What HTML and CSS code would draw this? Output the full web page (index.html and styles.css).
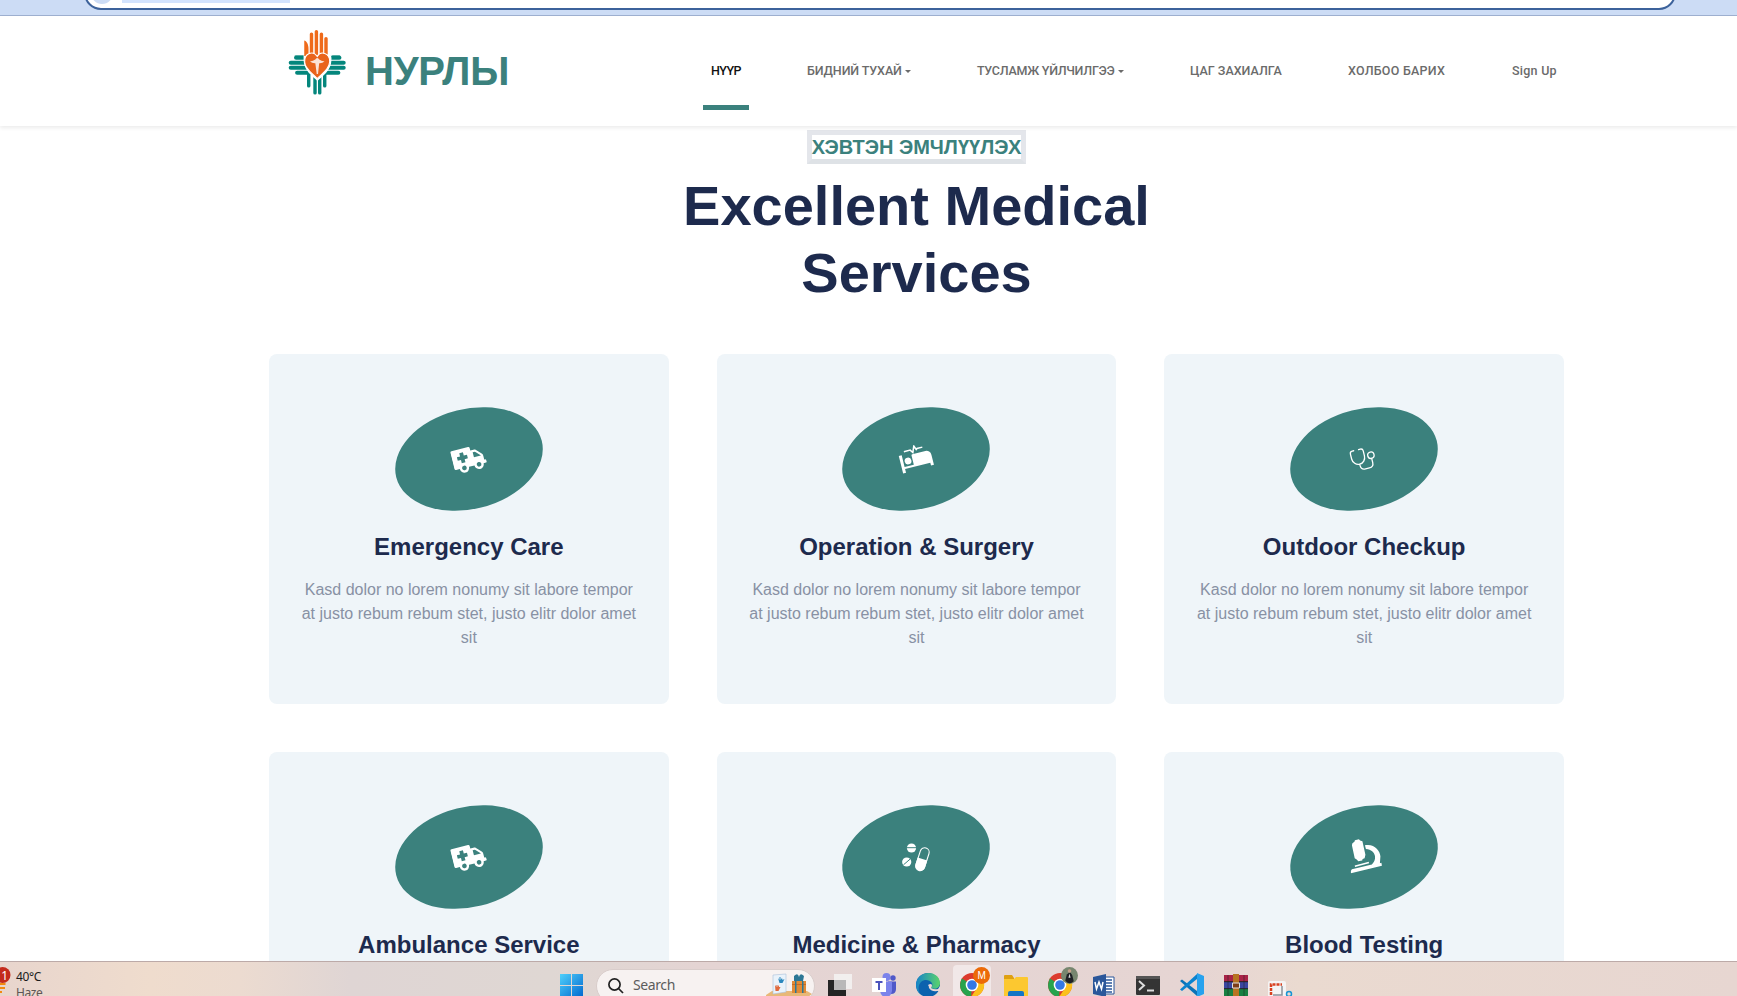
FILE: index.html
```html
<!DOCTYPE html>
<html lang="mn">
<head>
<meta charset="utf-8">
<title>НУРЛЫ</title>
<link rel="stylesheet" href="styles.css">
</head>
<body>
<svg class="defs" width="0" height="0">
  <defs>
    <symbol id="ambulance" viewBox="0 0 36 28">
      <path fill="#fff" fill-rule="evenodd" d="M2 1h18a1.500 1.500 0 0 1 1.500 1.500V5H25c1 0 1.800.3 2.500 1l5 5c.7.700 1 1.500 1 2.500V18h1a1 1 0 0 1 1 1v1.500a1 1 0 0 1-1 1H32a5 5 0 0 1-10 0h-6a5 5 0 0 1-10 0H2A1.500 1.500 0 0 1 .5 20V2.500A1.500 1.500 0 0 1 2 1zM9.500 5v3.500H6v4h3.500V16h4v-3.500H17v-4h-3.500V5zM23.500 7.500V13H31v-.500l-5-5zM11 19a2.500 2.500 0 1 0 0 5 2.500 2.500 0 0 0 0-5zM27 19a2.500 2.500 0 1 0 0 5 2.500 2.500 0 0 0 0-5z"/>
    </symbol>
  </defs>
</svg>
<div class="browser">
  <div class="address"><i class="site"></i><i class="url"></i></div>
</div>
<header class="navbar">
  <a class="brand">
    <svg class="logo" viewBox="0 0 60 68" preserveAspectRatio="none">
      <g stroke="#04867c" stroke-width="4" stroke-linecap="round" fill="none">
        <path stroke="#6fb9b0" stroke-width="2" d="M9 28H18M44 28H50"/>
        <path d="M9.500 29.800H50M4.500 34.800H54M4.500 39.800H54M10.500 44.800H49"/>
        <path stroke-width="3.200" d="M21.300 44V58M27.200 46V65M31.600 46V65M36.300 44V58"/>
      </g>
      <g transform="translate(1.500 0)">
        <path fill="#fff" d="M15 27C15 22 28 22 28 27C29 22 43 21 41 33C41 42 32 49 28 53C23 48 15 42 15 32z"/>
        <g stroke="#ef6a1a" stroke-width="3.200" stroke-linecap="round">
          <path d="M22.400 6V26M27 3.500V26M31.700 6V26M36 10.500V26"/>
        </g>
        <path fill="#ef6a1a" d="M15.600 12.500c2 0 4 4 4 8.500v7h-4z"/>
        <path fill="#e9641b" stroke="#fff" stroke-width="1" d="M27.800 28.500C24 22 15.500 25 16 34c.3 7 7 11 11.800 16.500C33 45 39 41 39.500 33.500 39.500 25 31 22.500 27.800 28.500z"/>
        <path fill="#fbe3d6" d="M21 33.500q3-.5 5-2 .5-1.500 1.800-1.500t1.800 1.500q2 1.500 5 2-2 2-5 1.800L28.500 46h-1.200L26 35.300q-3 .2-5-1.800z"/>
      </g>
    </svg>
    <span class="brand-name">НУРЛЫ</span>
  </a>
  <nav class="menu">
    <a class="n1 active">НҮҮР</a>
    <a class="n2"><span>БИДНИЙ ТУХАЙ</span><i class="caret"></i></a>
    <a class="n3"><span>ТУСЛАМЖ ҮЙЛЧИЛГЭЭ</span><i class="caret"></i></a>
    <a class="n4">ЦАГ ЗАХИАЛГА</a>
    <a class="n5">ХОЛБОО БАРИХ</a>
    <a class="n6">Sign Up</a>
  </nav>
</header>
<main class="container">
  <div class="heading">
    <h5 class="label">ХЭВТЭН ЭМЧЛҮҮЛЭХ</h5>
    <h1>Excellent Medical Services</h1>
  </div>
  <div class="services">
    <article class="card">
      <div class="icon"><svg width="34" height="27"><use href="#ambulance"/></svg></div>
      <h4>Emergency Care</h4>
      <p>Kasd dolor no lorem nonumy sit labore tempor at justo rebum rebum stet, justo elitr dolor amet sit</p>
    </article>
    <article class="card">
      <div class="icon"><svg width="34" height="28" viewBox="0 0 34 28" fill="#fff">
        <path fill="none" stroke="#fff" stroke-width="1.500" d="M7 4h6.500l2 3L18 .8l1.500 4 1-.8H26"/>
        <path d="M1 7h3v12h9.500V9.500a1 1 0 0 1 1-1H28a5 5 0 0 1 5 5V24h-3v-3H4v4H1z"/><circle cx="8.800" cy="14" r="3.400"/>
      </svg></div>
      <h4>Operation &amp; Surgery</h4>
      <p>Kasd dolor no lorem nonumy sit labore tempor at justo rebum rebum stet, justo elitr dolor amet sit</p>
    </article>
    <article class="card">
      <div class="icon"><svg width="28" height="28" viewBox="0 0 28 28" fill="none" stroke="#fff" stroke-width="1.300" stroke-linecap="round">
        <path d="M6 3.500H4.500Q2 3.500 2 6v5a6.600 7 0 0 0 13.200 0V6Q15.200 3.500 12.700 3.500H11M8.600 18v1.500q0 4.500 4.500 4.500h4q4.500 0 4.500-4.500v-4.300"/><circle cx="21.600" cy="12" r="3.200"/>
      </svg></div>
      <h4>Outdoor Checkup</h4>
      <p>Kasd dolor no lorem nonumy sit labore tempor at justo rebum rebum stet, justo elitr dolor amet sit</p>
    </article>
    <article class="card">
      <div class="icon"><svg width="34" height="27"><use href="#ambulance"/></svg></div>
      <h4>Ambulance Service</h4>
      <p>Kasd dolor no lorem nonumy sit labore tempor at justo rebum rebum stet, justo elitr dolor amet sit</p>
    </article>
    <article class="card">
      <div class="icon"><svg class="upright" width="30" height="30" viewBox="0 0 30 30">
        <circle cx="10.500" cy="6" r="4.600" fill="#fff"/><path stroke="#3b817d" d="M6 5.700h9"/>
        <circle cx="5.700" cy="20" r="4.600" fill="#fff"/><path stroke="#3b817d" d="M2.500 22.800l6.500-5.600"/>
        <g transform="rotate(18 21.500 17)"><rect x="17" y="5.500" width="9" height="23" rx="4.500" fill="none" stroke="#fff" stroke-width="1.100"/><path fill="#fff" d="M16.500 17h10v7.500a5 5 0 0 1-10 0z"/></g>
      </svg></div>
      <h4>Medicine &amp; Pharmacy</h4>
      <p>Kasd dolor no lorem nonumy sit labore tempor at justo rebum rebum stet, justo elitr dolor amet sit</p>
    </article>
    <article class="card">
      <div class="icon"><svg class="upright scope" width="34" height="36" viewBox="0 0 34 36" fill="#fff">
        <path d="M2.500 5l2-1.500L5 2l4-1 1.200 1.200L12.500 3 15.500 16.500 14.700 20l-2 .8-.4 1.500-4 .8-1.200-1.600-2.300-1.400L2 7z"/>
        <path d="M15 7C24 5 30 12 30.500 18l-.5 7 1.500-.5.500 3L1 35v-2.500L2 31l20-4.800C27 22 27 12 16 10.800z"/><path stroke="#fff" stroke-width="1.500" d="M5 28l14-3.700"/>
      </svg></div>
      <h4>Blood Testing</h4>
      <p>Kasd dolor no lorem nonumy sit labore tempor at justo rebum rebum stet, justo elitr dolor amet sit</p>
    </article>
  </div>
</main>
<footer class="taskbar">
  <div class="weather">
    <svg width="12" height="35" viewBox="0 0 12 35"><path stroke="#f28a10" stroke-width="2" d="M0 22h5.500M0 26h5M0 30h2"/><circle cx="2.500" cy="13" r="8" fill="#c42b1c"/><text x="1.300" y="17.500" fill="#fff" class="badge">1</text></svg>
    <div class="temp"><b>40°C</b><span>Haze</span></div>
  </div>
  <svg class="win" width="23" height="23" viewBox="0 0 23 23"><defs><linearGradient id="wg" x2="1" y2="1"><stop stop-color="#4fd0fb"/><stop offset="1" stop-color="#0268cf"/></linearGradient></defs><path fill="url(#wg)" d="M0 0h11v11H0zM12 0h11v11H12zM0 12h11v11H0zM12 12h11v11H12z"/></svg>
  <div class="search">
    <svg width="16" height="16" viewBox="0 0 16 16" fill="none" stroke="#222" stroke-width="1.700"><circle cx="6.500" cy="6.500" r="5.600"/><path d="M10.500 10.500L15 15"/></svg>
    <span>Search</span>
    <svg class="gifts" width="46" height="24" viewBox="0 0 46 24"><path fill="#e8b878" d="M0 22l6-4h35l5 3-4 3H0z"/><path fill="#e9f2fa" stroke="#a9bfda" stroke-width=".6" d="M7 2l13-1v18L7 21z"/><path fill="#2a87bd" d="M12 5l1.500 2V4h1v3l1.500-2 .5 2 2-1-2 4h-3z"/><path fill="#e0693c" d="M9 12l1.500 2v-2h1v2l1.500-2v2l1.500 0-2 4h-3z"/><path fill="#e08a35" d="M26 8h14v12H26z"/><path fill="#c86a20" d="M26 11h14v1H26z"/><path fill="#2c7795" d="M28 3q4-4 5 1 1-5 5-1l-1 5h-9zM29 8h1.500v12H29zM36 8h1.500v12H36z"/></svg>
  </div>
  <div class="apps">
    <svg viewBox="0 0 26 24"><path fill="#252525" d="M1 7h18v17H1z"/><path fill="#f2f0ef" fill-opacity=".95" d="M7 1h18v15H7z"/><path fill="#b9b8b8" d="M7 7h12v10H7z"/></svg>
    <svg viewBox="0 0 26 24"><circle cx="15.500" cy="4" r="4" fill="#7b83eb"/><circle cx="22" cy="5" r="2.700" fill="#5059c9"/><path fill="#5059c9" d="M17 8.500h8V16q0 5-5 5z"/><path fill="#7b83eb" d="M10 8.500h11V18q-1 6-6 6t-6-6z"/><path fill="#fff" d="M1 5h14v14H1z"/><path fill="#4b53bc" d="M4.500 8h7v2H9v7H7v-7H4.500z"/></svg>
    <svg viewBox="0 0 26 24"><defs><linearGradient id="eg" x2="1"><stop stop-color="#1684c9"/><stop offset="1" stop-color="#5bd36b"/></linearGradient></defs><circle cx="13" cy="12" r="12" fill="#0c62ae"/><path fill="url(#eg)" d="M1 12C1-3 24-4 25 10c0 5-5 7-9 5 5-6-5-11-10-6-3 3-3 8-1 12Q1 17 1 12z"/><path fill="#e8d8d6" d="M16 15q3 2 7 1l2-3v5h-3q-5 1-8-3 0-2-1-3 3-2 4 0 0 2-1 3z"/></svg>
    <div class="tile"><svg viewBox="0 0 26 24"><circle cx="12" cy="12" r="12" fill="#dc3a2d"/><path fill="#27a34d" d="M2 5.500L12 12l-1 12A12 12 0 0 1 2 5.500z"/><path fill="#fbc01c" d="M12 7h11A12 12 0 0 1 11 24l6-9z"/><circle cx="12" cy="12" r="6.300" fill="#fff"/><circle cx="12" cy="12" r="4.800" fill="#3478e5"/></svg><svg class="pic" viewBox="0 0 16 16"><circle cx="8" cy="8" r="8" fill="#ec6a08"/><text x="4.200" y="11" class="m">M</text></svg></div>
    <svg viewBox="0 0 26 24"><path fill="#dfa012" d="M1 3q0-1 1-1h7l2 3v5H1z"/><path fill="#fcc830" d="M1 6h10l2-2h11q1 0 1 1v19H1z"/><path fill="#1575c5" d="M5 24v-4q0-2 2-2h12q2 0 2 2v4z"/></svg>
    <div class="tile plain"><svg viewBox="0 0 26 24"><circle cx="12" cy="12" r="12" fill="#dc3a2d"/><path fill="#27a34d" d="M2 5.500L12 12l-1 12A12 12 0 0 1 2 5.500z"/><path fill="#fbc01c" d="M12 7h11A12 12 0 0 1 11 24l6-9z"/><circle cx="12" cy="12" r="6.300" fill="#fff"/><circle cx="12" cy="12" r="4.800" fill="#3478e5"/></svg><svg class="pic" viewBox="0 0 16 16"><circle cx="8" cy="8" r="8" fill="#77866f"/><path fill="#1e2025" d="M4 13l1.500-6 2-1.500 1.500 0 1.500 2 1.500 6q-4 4-8-.5z"/><circle cx="8" cy="3.700" r="1.700" fill="#c79f8a"/><path fill="#d8d8d8" d="M8 6l1 4H7z"/></svg></div>
    <svg viewBox="0 0 26 24"><path fill="#fff" stroke="#2b579a" d="M12 4h11v17H12z"/><path stroke="#2b579a" stroke-width="1.500" d="M14 7h7M14 10h7M14 13h7M14 16h7M14 19h7"/><path fill="#2b579a" d="M2 4l13-3v23L2 21z"/><path fill="none" stroke="#fff" stroke-width="1.500" d="M4 9l1.500 7L8 9l2.500 7L12 9"/></svg>
    <svg viewBox="0 0 26 24"><rect x="1" y="3" width="24" height="19" rx="1" fill="#343434"/><path fill="#555" d="M1 3h24v3H1z"/><path fill="none" stroke="#ddd" stroke-width="2" d="M4 8l5 4.500L4 17M12 17.500h7"/></svg>
    <svg viewBox="0 0 26 24"><path fill="#0b73b8" d="M1 8l2-1.500L18 18v5z"/><path fill="#0a83cf" d="M1 16.500L18 1v5L3 18z"/><path fill="#27a2ee" d="M18 0l7 3v18l-7 3z"/></svg>
    <svg viewBox="0 0 26 24"><path fill="#a92347" d="M1 2h24v7H1z"/><path fill="#3a45a0" d="M1 9h24v7H1z"/><path fill="#198042" d="M1 16h24v7H1z"/><path stroke="#222" d="M1 8.700h24M1 15.700h24"/><path stroke="#222" stroke-width=".5" d="M5 2v21M21 2v21"/><path fill="#b87422" d="M10 1h6v23h-6z"/><path fill="#7c3d18" stroke="#ddd" d="M9.500 10h7v5h-7z"/></svg>
    <svg class="snip" viewBox="0 0 26 24"><rect x="1" y="8" width="18" height="18" rx="2" fill="#f4f4f4"/><path fill="none" stroke="#d8401f" stroke-width="2.500" stroke-dasharray="3 1" d="M4 22V11.500h11"/><path fill="none" stroke="#8b9199" stroke-width="1.500" d="M15 13v9H6"/><circle cx="22" cy="21" r="2.500" fill="none" stroke="#1694d5" stroke-width="1.500"/></svg>
  </div>
</footer>
</body>
</html>
```
FILE: styles.css
```css
* { box-sizing: border-box; }
body {
  margin: 0;
  height: 996px;
  overflow: hidden;
  display: flex;
  flex-direction: column;
  background: #fff;
  font-family: "Liberation Sans", Arial, sans-serif;
}
.defs { display: block; flex: none; }
.browser {
  flex: none;
  height: 16px;
  background: #ccdcf5;
  border-bottom: 1px solid #9fb1d1;
  overflow: hidden;
}
.address {
  width: 1592px;
  height: 34px;
  margin: -24px 0 0 84px;
  padding-left: 5px;
  background: #fff;
  border: 2px solid #3c629b;
  border-radius: 17px;
  display: flex;
  align-items: flex-start;
  gap: 9px;
}
.site { width: 22px; height: 22px; margin-top: 4px; border-radius: 50%; background: #ccdcf5; }
.url { width: 168px; height: 25px; background: #d3e3fd; }
.navbar {
  flex: none;
  height: 110px;
  display: flex;
  position: relative;
  background: #fff;
  box-shadow: 0 2px 4px rgba(0, 0, 0, .08);
}
.brand { display: flex; margin-left: 286px; width: 417px; }
.logo { margin-top: 12px; flex: none; width: 64px; height: 68px; }
.brand-name { margin: 31px 0 0 15px; font-size: 40px; line-height: 48px; font-weight: 700; letter-spacing: -.2px; color: #3b817d; }
.menu { display: flex; gap: 50px; padding-top: 40px; font: 500 12.500px/29px Roboto, sans-serif; color: #6b6b6b; }
.menu a { display: flex; height: 54px; padding: 0 8px; white-space: nowrap; align-items: flex-start; }
.menu .active { color: #111; border-bottom: 5px solid #3b817d; }
.n1 { width: 46px; letter-spacing: -.5px; }
.n2 { width: 120px; letter-spacing: -.1px; }
.n3 { width: 163px; letter-spacing: -.25px; }
.n4 { width: 108px; }
.n5 { width: 114px; letter-spacing: .25px; }
.n6 { width: 61px; letter-spacing: .25px; }
.caret { margin: 14px 0 0 3px; border: 3px solid transparent; border-top-color: #6b6b6b; border-bottom: 0; }
.container { flex: 1; min-height: 0; overflow: hidden; width: 1295px; margin-left: 269px; }
.heading { display: flex; flex-direction: column; align-items: center; padding-top: 4px; height: 228px; text-align: center; }
.label { margin: 0 0 8px; border: 5px solid #e4e6eb; border-bottom-color: #dee2e6; font-size: 20px; line-height: 24px; font-weight: 700; color: #3b817d; white-space: nowrap; }
h1 { margin: 0; width: 500px; font-size: 56px; line-height: 67.200px; color: #1d2a4d; }
.services { display: grid; grid-template-columns: repeat(3, 1fr); gap: 48px; grid-auto-rows: 350px; }
.card { display: flex; flex-direction: column; align-items: center; justify-content: center; background: #eff5f9; border-radius: 8px; text-align: center; padding: 0 30px; }
.icon { flex: none; width: 150px; height: 100px; margin-bottom: 24px; border-radius: 50%; background: #3b817d; transform: rotate(-14deg); display: flex; align-items: center; justify-content: center; }
.upright { transform: rotate(14deg); }
.scope { margin-left: 5px; }
h4 { margin: 0 0 16px; font-size: 24px; line-height: 28.800px; color: #1d2a4d; white-space: nowrap; }
.card p { margin: 1px 0 -1px; font-size: 16px; line-height: 24px; color: #8891a4; }
.taskbar {
  flex: none;
  position: relative;
  display: flex;
  height: 35px;
  border-top: 1px solid #bcaaa8;
  background: linear-gradient(90deg, #e8d5cd 0, #efdccd 150px, #ecdbd0 240px, #dfd5d4 350px, #dfd7d3 550px, #e4d4d3 700px, #e6d5d3 1200px, #eadad0 1300px, #e7d6d1 1737px);
  overflow: hidden;
}
.weather { display: flex; width: 560px; }
.badge { font: 12px "Noto Sans", sans-serif; }
.temp { display: flex; flex-direction: column; margin: 7px 0 0 4px; font: 12px/16px "Noto Sans", sans-serif; letter-spacing: -.4px; }
.temp b { font-weight: 400; color: #1b1b1b; }
.temp span { color: #5d5654; }
.win { margin-top: 12px; }
.search { display: flex; flex: none; width: 219px; height: 34px; margin: 7px 0 0 13px; padding: 8px 2px 0 11px; border-radius: 17px; background: #f7f2f1; border: 1px solid #d9cdcb; font: 14px/16px "Noto Sans", sans-serif; letter-spacing: -.4px; color: #5c5c5c; }
.search span { margin: -1px 0 0 9px; }
.gifts { margin: -5px 0 0 auto; flex: none; width: 46px; }
.apps { display: flex; gap: 18px; margin: 11px 0 0 12px; }
.apps > svg, .tile > svg { width: 26px; height: 24px; flex: none; }
.apps > svg { overflow: visible; }
.tile { position: relative; width: 38px; height: 36px; margin: -8px -6px 0; padding: 8px 0 0 7px; background: #f1e8e8; border-radius: 4px; }
.tile.plain { background: none; }
.tile > .pic { position: absolute; width: 17px; height: 17px; left: 20px; top: 2px; }
.m { font: 9.500px "Liberation Sans", sans-serif; fill: #fff; }
```
